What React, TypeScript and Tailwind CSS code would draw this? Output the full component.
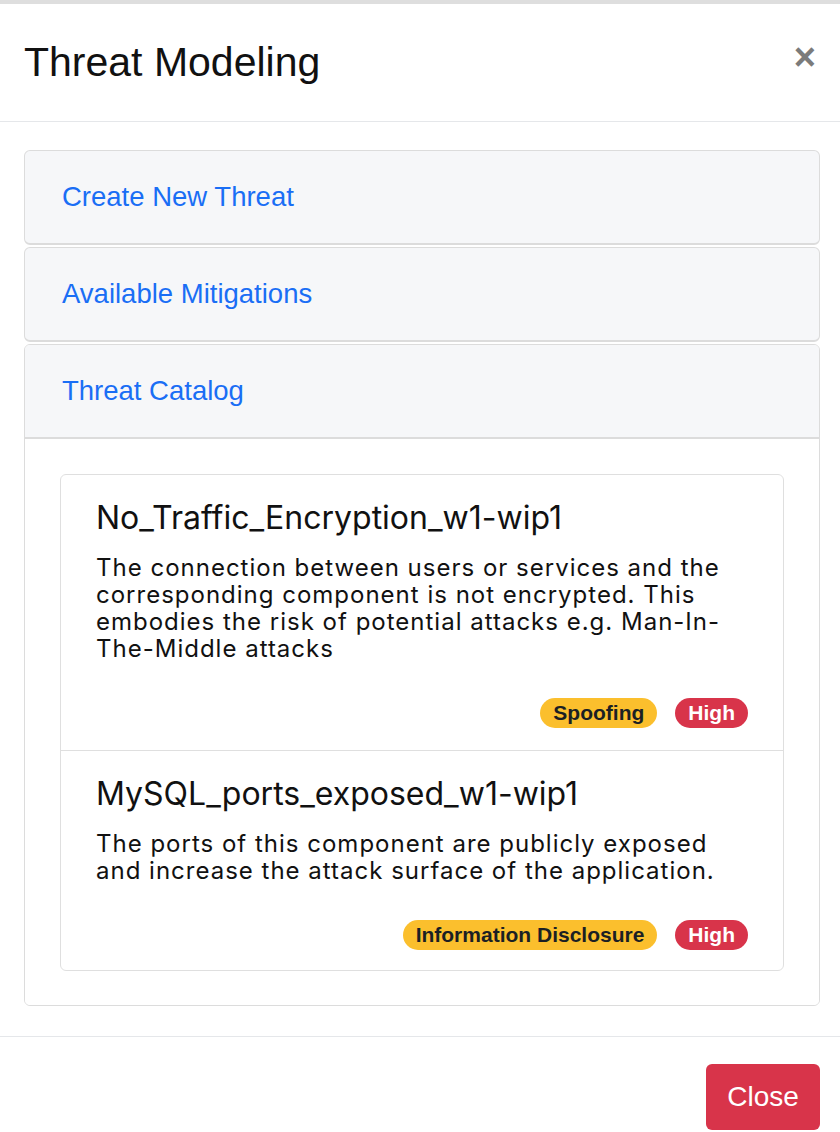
import React from "react";

const threats = [
  {
    name: "No_Traffic_Encryption_w1-wip1",
    description:
      "The connection between users or services and the corresponding component is not encrypted. This embodies the risk of potential attacks e.g. Man-In-The-Middle attacks",
    category: "Spoofing",
    severity: "High",
  },
  {
    name: "MySQL_ports_exposed_w1-wip1",
    description:
      "The ports of this component are publicly exposed and increase the attack surface of the application.",
    category: "Information Disclosure",
    severity: "High",
  },
];

const sections = ["Create New Threat", "Available Mitigations"];

function Badge({ children, tone }: { children: React.ReactNode; tone: "warning" | "danger" }) {
  return (
    <span
      className={
        tone === "warning"
          ? "inline-flex h-[30px] items-center rounded-full bg-[#fbbf2d] px-[13px] text-[21px] font-bold text-[#1b1f24]"
          : "inline-flex h-[30px] items-center rounded-full bg-[#d8344a] px-[13px] text-[21px] font-bold text-white"
      }
      style={{ fontFamily: '"Liberation Sans", Arial, sans-serif' }}
    >
      {children}
    </span>
  );
}

export default function App() {
  return (
    <div
      className="h-[1132px] w-[840px] overflow-hidden border-t-4 border-[#dedede] bg-white"
      style={{ fontFamily: '"Liberation Sans", Arial, sans-serif' }}
    >
      {/* header */}
      <div className="flex h-[118px] items-center justify-between border-b border-[#e5e7ea] pl-6 pr-6">
        <h1 className="text-[41px] leading-none text-[#111]">Threat Modeling</h1>
        <button type="button" className="-mt-3 text-[38px] font-bold leading-none text-[#7b7b7b]">
          ×
        </button>
      </div>

      {/* body */}
      <div className="pl-6 pr-5 pt-[28px] pb-[30px]">
        <div className="flex flex-col gap-[2px]">
          {sections.map((s) => (
            <div
              key={s}
              className="flex h-[95px] items-center rounded-[6px] border border-b-2 border-[#dcdcdc] bg-[#f6f7f9] px-[37px]"
            >
              <span className="text-[27.5px] text-[#1a6ef5]">{s}</span>
            </div>
          ))}

          <div className="overflow-hidden rounded-[6px] border border-[#dcdcdc]">
            <div className="flex h-[94px] items-center border-b-2 border-[#dcdcdc] bg-[#f6f7f9] px-[37px]">
              <span className="text-[27.5px] text-[#1a6ef5]">Threat Catalog</span>
            </div>
            <div className="bg-white px-[35px] pt-[35px] pb-[34px]">
              <div className="overflow-hidden rounded-[6px] border border-[#dfdfdf]">
                {threats.map((t, i) => (
                  <div
                    key={t.name}
                    className={
                      i === 0
                        ? "border-b border-[#dfdfdf] px-[35px] pt-[25px] pb-[22px]"
                        : "px-[35px] pt-[25px] pb-[20px]"
                    }
                    style={{ fontFamily: "Inter, sans-serif" }}
                  >
                    <div className="text-[32px] leading-[36px] text-[#111]">{t.name}</div>
                    <p className="mt-[18px] text-[24px] leading-[27px] tracking-[1px] text-[#111]">
                      {t.description}
                    </p>
                    <div className="mt-[36px] flex justify-end gap-[18px]">
                      <Badge tone="warning">{t.category}</Badge>
                      <Badge tone="danger">{t.severity}</Badge>
                    </div>
                  </div>
                ))}
              </div>
            </div>
          </div>
        </div>
      </div>

      {/* footer */}
      <div className="flex justify-end border-t border-[#e5e7ea] px-5 pt-[27px]">
        <button
          type="button"
          className="h-[66px] w-[114px] rounded-[6px] bg-[#d8344a] text-[28px] text-white"
        >
          Close
        </button>
      </div>
    </div>
  );
}
